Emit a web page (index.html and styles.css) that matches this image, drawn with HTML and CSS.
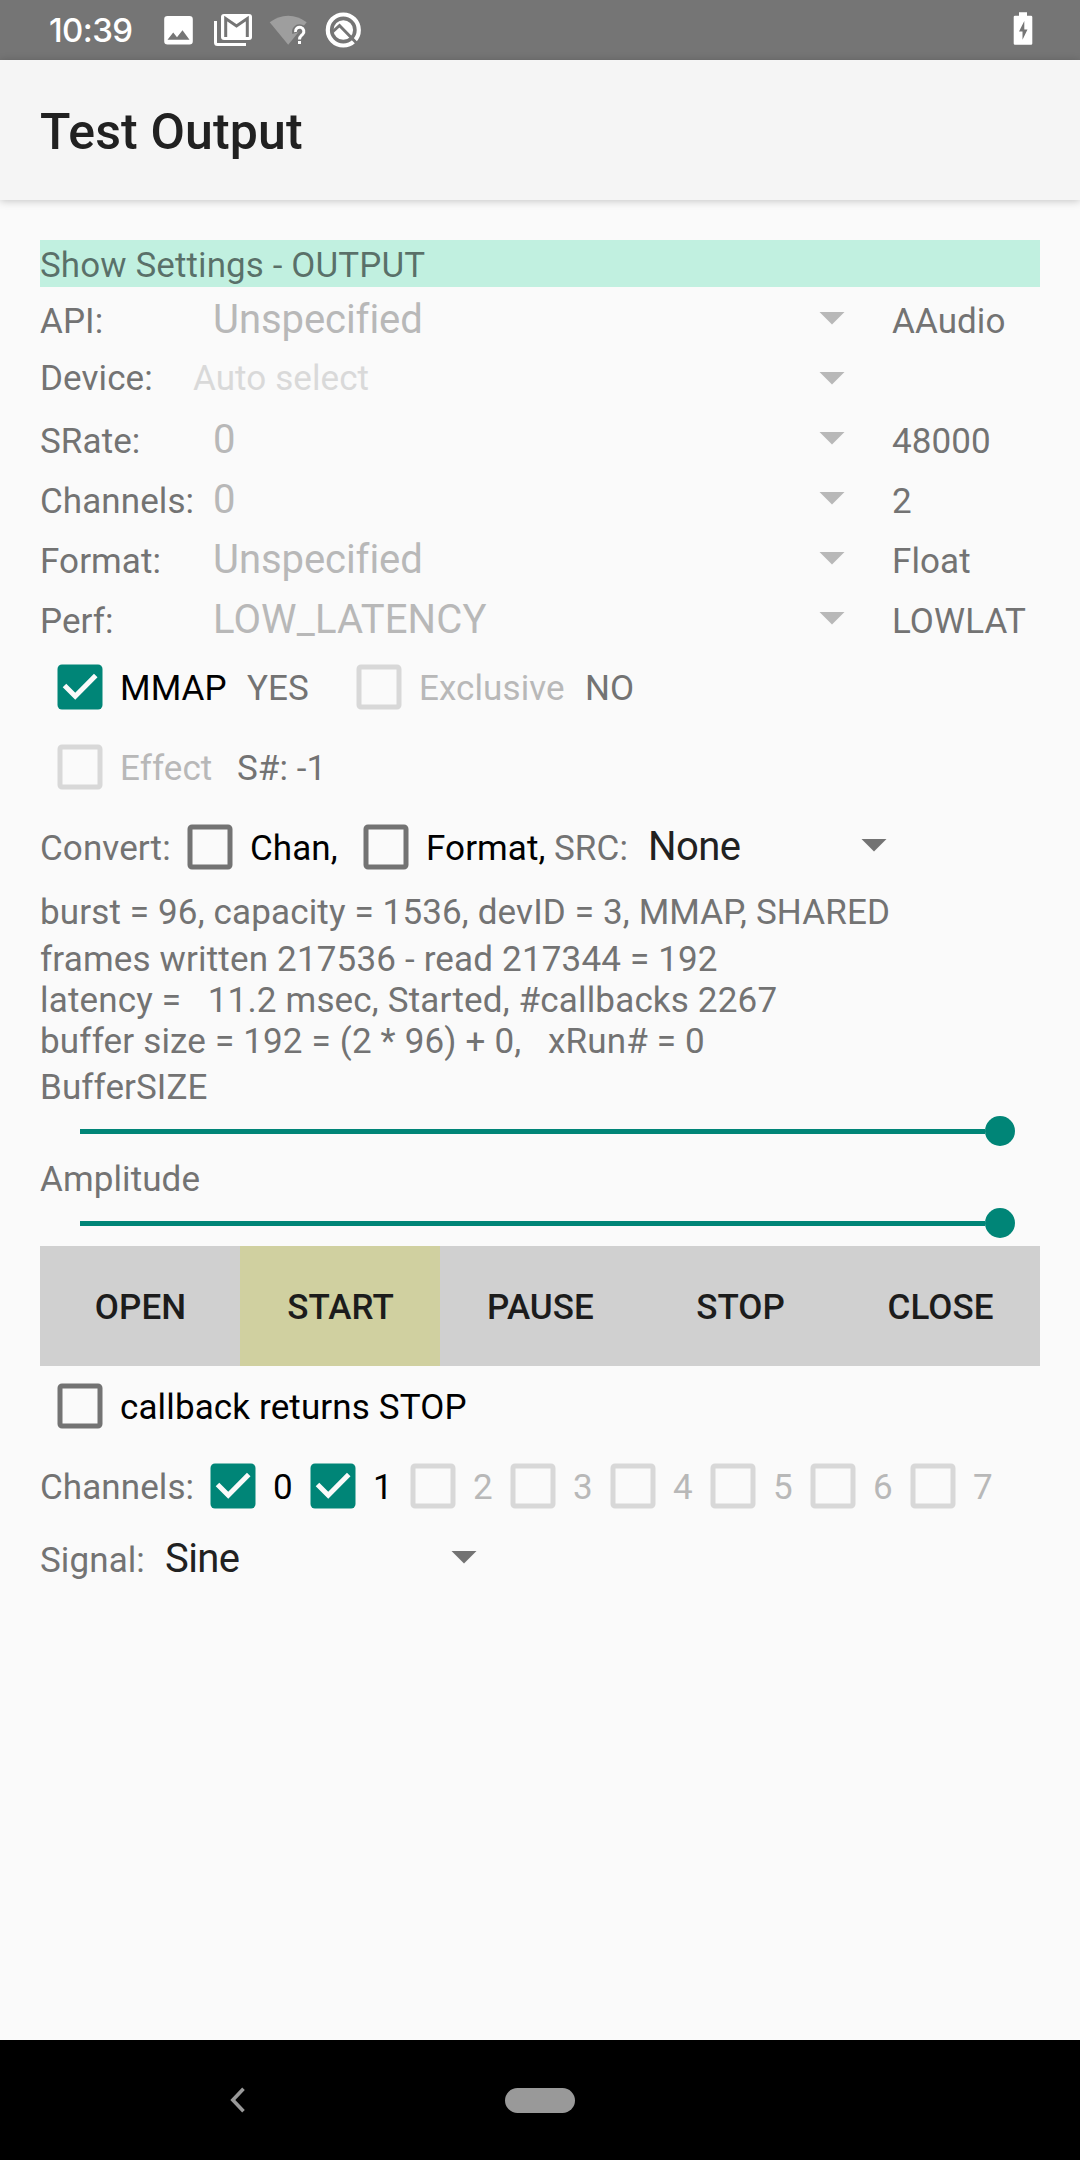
FILE: index.html
```html
<!DOCTYPE html>
<html lang="en">
<head>
<meta charset="utf-8">
<title>Test Output</title>
<link rel="stylesheet" href="styles.css">
</head>
<body>
<svg class="defs" width="0" height="0" aria-hidden="true">
  <symbol id="arrow" viewBox="0 0 24 24"><path fill="currentColor" d="M7 10l5 5 5-5z"/></symbol>
  <symbol id="box" viewBox="0 0 32 32"><rect x="8" y="8" width="16" height="16" rx=".8" fill="none" stroke="currentColor" stroke-width="2"/></symbol>
  <symbol id="checked" viewBox="0 0 32 32"><rect x="7" y="7" width="18" height="18" rx="1.8" fill="#008577"/><path d="M9.800 15.400l4.300 4.300 8.200-8.300" fill="none" stroke="#fafafa" stroke-width="2"/></symbol>
</svg>
<div class="screen">
  <header class="status">
    <span class="clock">10:39</span>
    <svg class="status-icons" viewBox="150 0 220 60" width="220" height="60">
      <path fill="#fff" fill-rule="evenodd" d="M167.500 16h22a3.300 3.300 0 0 1 3.300 3.300v22a3.300 3.300 0 0 1-3.300 3.300h-22a3.300 3.300 0 0 1-3.300-3.300v-22a3.300 3.300 0 0 1 3.300-3.300zM167.500 39.700h22l-7-9.500-5.500 7-3.800-4.700z"/>
      <path fill="none" stroke="#fff" stroke-width="3" d="M215.500 21v21.500a2 2 0 0 0 2 2H246"/>
      <rect x="221" y="14" width="31" height="26" rx="3" fill="#fff"/>
      <path fill="none" stroke="#757575" stroke-width="3" d="M225.700 37V18.500l10.800 7.500 10.800-7.500V37"/>
      <path fill="#9e9e9e" d="M269.700 22.300Q278 15.700 288.200 15.700T306.700 22.300L288.200 44.700z"/>
      <path fill="none" stroke="#757575" stroke-width="6.500" d="M295.500 33a4.200 4.200 0 1 1 7.300 1.500c-1.700 1.700-3.300 2.500-3.300 9.500"/>
      <path fill="none" stroke="#fff" stroke-width="3" d="M295.500 32a4.200 4.200 0 1 1 7.200 2.300c-1.700 1.700-3.200 2.300-3.200 5.200M299.500 41v3"/>
      <circle cx="343.300" cy="30" r="15.500" fill="none" stroke="#fff" stroke-width="4.200"/>
      <circle cx="343.300" cy="30" r="9.800" fill="#fff"/>
      <path fill="none" stroke="#757575" stroke-width="3" d="M333 31.500l6.500-6L357.500 44"/>
    </svg>
    <svg class="battery" viewBox="0 0 20 34" width="20" height="34">
      <path fill="#fff" fill-rule="evenodd" d="M6 .300h8v3.500h4q1.300 0 1.300 1.300v26.400q0 1.300-1.300 1.300H2q-1.300 0-1.300-1.300V5.100q0-1.300 1.300-1.300h4zM11.300 9L6 19.600h3.500v8.200l5-10.400h-3.200z"/>
    </svg>
  </header>
  <div class="appbar"><h1>Test Output</h1></div>
  <main class="content">
    <div class="show">Show Settings - OUTPUT</div>
    <div class="setting"><span>API:</span><span class="value">Unspecified</span><svg class="arrow"><use href="#arrow"/></svg><span class="actual">AAudio</span></div>
    <div class="setting device"><span>Device:</span><span class="hint">Auto select</span><svg class="arrow"><use href="#arrow"/></svg><span class="actual"></span></div>
    <div class="setting"><span>SRate:</span><span class="value">0</span><svg class="arrow"><use href="#arrow"/></svg><span class="actual">48000</span></div>
    <div class="setting"><span>Channels:</span><span class="value">0</span><svg class="arrow"><use href="#arrow"/></svg><span class="actual">2</span></div>
    <div class="setting"><span>Format:</span><span class="value">Unspecified</span><svg class="arrow"><use href="#arrow"/></svg><span class="actual">Float</span></div>
    <div class="setting"><span>Perf:</span><span class="value caps">LOW_LATENCY</span><svg class="arrow"><use href="#arrow"/></svg><span class="actual">LOWLAT</span></div>

    <div class="row">
      <label class="check mmap"><svg><use href="#checked"/></svg>MMAP</label><span class="yes">YES</span>
      <label class="check off exclusive"><svg><use href="#box"/></svg>Exclusive</label><span>NO</span>
    </div>
    <div class="row">
      <label class="check off effect"><svg><use href="#box"/></svg>Effect</label><span>S#: -1</span>
    </div>
    <div class="row">
      <span class="convert">Convert:</span>
      <label class="check chan"><svg><use href="#box"/></svg>Chan,</label>
      <label class="check format"><svg><use href="#box"/></svg>Format,</label>
      <span class="src">SRC:</span>
      <span class="spinner none">None</span><svg class="arrow on"><use href="#arrow"/></svg>
    </div>

    <div class="line burst">burst = 96, capacity = 1536, devID = 3, MMAP, SHARED</div>
    <div class="stats">frames written 217536 - read 217344 = 192
latency =   11.2 msec, Started, #callbacks 2267
buffer size = 192 = (2 * 96) + 0,   xRun# = 0</div>
    <div class="line">BufferSIZE</div>
    <div class="slider"><i class="track"></i><i class="thumb"></i></div>
    <div class="line">Amplitude</div>
    <div class="slider"><i class="track"></i><i class="thumb"></i></div>

    <div class="buttons">
      <button>OPEN</button><button class="active">START</button><button>PAUSE</button><button>STOP</button><button>CLOSE</button>
    </div>
    <div class="row"><label class="check callback"><svg><use href="#box"/></svg>callback returns STOP</label></div>
    <div class="row">
      <span class="chlabel">Channels:</span>
      <label class="check ch"><svg><use href="#checked"/></svg>0</label>
      <label class="check ch"><svg><use href="#checked"/></svg>1</label>
      <label class="check ch off"><svg><use href="#box"/></svg>2</label>
      <label class="check ch off"><svg><use href="#box"/></svg>3</label>
      <label class="check ch off"><svg><use href="#box"/></svg>4</label>
      <label class="check ch off"><svg><use href="#box"/></svg>5</label>
      <label class="check ch off"><svg><use href="#box"/></svg>6</label>
      <label class="check ch off"><svg><use href="#box"/></svg>7</label>
    </div>
    <div class="signal"><span class="siglabel">Signal:</span><span class="spinner sine">Sine</span><svg class="arrow on"><use href="#arrow"/></svg></div>
  </main>
  <nav class="nav">
    <svg class="back" viewBox="0 0 16 26" width="16" height="26"><path d="M13.500 1.700L2.800 13l10.700 11.300" fill="none" stroke="#999" stroke-width="3.600"/></svg>
    <i class="pill"></i>
  </nav>
</div>
</body>
</html>
```

FILE: styles.css
```css
* { box-sizing: border-box; }
body { margin: 0; background: #fafafa; }
.defs { position: absolute; }
.screen {
  width: 1080px;
  height: 2160px;
  display: flex;
  flex-direction: column;
  font: 35px/52px Roboto, sans-serif;
  letter-spacing: .09px;
  color: #737373;
  overflow: hidden;
}
.status {
  height: 60px;
  background: #757575;
  display: flex;
  align-items: center;
  padding: 0 47px 0 49px;
}
.clock { width: 101px; font: 500 33px/60px Inter, sans-serif; letter-spacing: -.6px; color: #fff; }
.battery { margin-left: auto; margin-top: -2px; }
.appbar {
  height: 140px;
  background: #f5f5f5;
  padding-left: 40px;
  box-shadow: 0 1px 8px rgba(0, 0, 0, .22);
}
h1 { margin: 0; font: 500 50px/145px Roboto, sans-serif; letter-spacing: .15px; color: #212121; }
.content { flex: 1; padding: 40px 40px 0; }
.show { height: 47px; background: #c1f0e0; color: rgba(0, 0, 0, .54); }

.setting {
  display: grid;
  grid-template-columns: 152.500px 609.500px 90px 1fr;
  height: 60px;
  line-height: 69px;
}
.setting > * { height: 60px; white-space: nowrap; }
.device { line-height: 63px; }
.value { font-size: 40px; padding-left: 20.500px; color: #b8b8b8; line-height: 65px; letter-spacing: -.06px; }
.caps { letter-spacing: .15px; }
.hint { color: #d9d9d9; padding-left: .5px; }
.arrow { width: 60px; height: 60px; color: #b8b8b8; flex: none; }
.arrow.on { color: #737373; }

.row { display: flex; height: 80px; line-height: 83px; white-space: nowrap; }
.check { display: flex; color: #000; flex: none; }
.check svg { width: 80px; height: 80px; color: #737373; flex: none; }
.off { color: #b8b8b8; }
.off svg { color: #d8d8d8; }
.mmap { width: 207px; }
.yes { width: 92px; }
.exclusive { width: 246px; }
.effect { width: 197px; }
.convert { width: 130px; }
.chan { width: 176px; }
.format { width: 208px; }
.src { width: 94px; }
.spinner { font-size: 40px; letter-spacing: -.6px; color: #212121; }
.none { width: 196px; line-height: 80px; }
.row > .arrow { margin-top: 7px; }
.callback { letter-spacing: .13px; }

.line { height: 47px; }
.burst { letter-spacing: .145px; }
.stats { height: 128px; padding-top: 5px; line-height: 41px; letter-spacing: .17px; white-space: pre; }
.slider { display: flex; align-items: center; height: 45px; padding-left: 40px; }
.track { width: 905px; height: 5px; background: #008577; }
.thumb { width: 30px; height: 30px; margin: -1px 0 0 -.5px; border-radius: 50%; background: #008577; }

.buttons { display: grid; grid-template-columns: repeat(5, 1fr); height: 120px; background: #d0d0d0; }
button { border: 0; padding: 3px 0 0 1px; background: none; font: 500 35px/117px Roboto, sans-serif; letter-spacing: .05px; color: #1c1c1c; }
.active { background: #d0d0a0; }
.chlabel { width: 153px; }
.ch { width: 100px; }
.signal { display: flex; height: 60px; line-height: 69px; }
.siglabel { width: 125px; }
.sine { width: 269px; line-height: 65px; }

.nav { display: flex; align-items: center; height: 120px; padding-left: 230px; background: #000; }
.pill { width: 70px; height: 25px; margin-left: 259px; border-radius: 13px; background: #999; }
```
